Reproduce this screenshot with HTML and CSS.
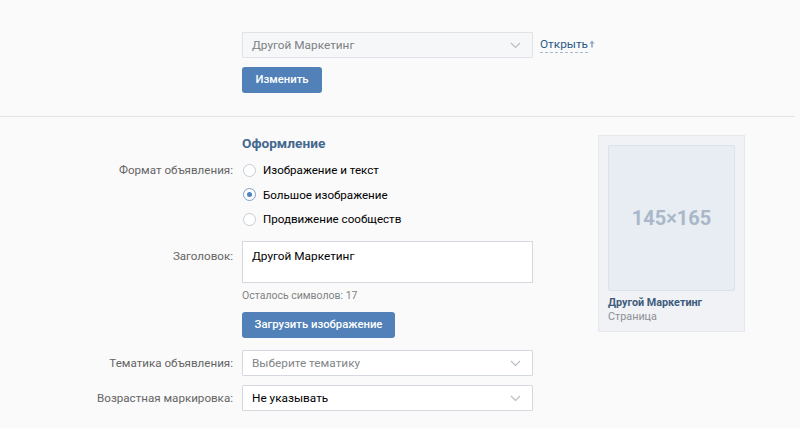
FILE: index.html
```html
<!DOCTYPE html>
<html lang="ru">
<head>
<meta charset="utf-8">
<link rel="stylesheet" href="styles.css">
</head>
<body>
<div class="page">
  <section class="top">
    <div class="top-row">
      <div class="select select-disabled">
        <span class="select-text">Другой Маркетинг</span>
        <svg class="chev" width="11" height="7" viewBox="0 0 11 7"><path d="M1 1l4.5 4.5L10 1" fill="none" stroke="#b8bec6" stroke-width="1.2"/></svg>
      </div>
      <a class="open-link"><span class="dashed">Открыть</span><svg class="arrow" width="6" height="8" viewBox="0 0 6 8"><path d="M3 0.5L5.6 3.5H3.8V7.5H2.2V3.5H0.4Z" fill="#93a8c0"/></svg></a>
    </div>
    <button class="btn btn-change">Изменить</button>
  </section>
  <hr class="divider">
  <section class="design">
    <div class="form">
      <div class="row">
        <div class="label"></div>
        <h2 class="heading">Оформление</h2>
      </div>
      <div class="row row-format">
        <div class="label label-radio">Формат объявления:</div>
        <div class="radios">
          <label class="radio"><span class="dot"></span>Изображение и текст</label>
          <label class="radio checked"><span class="dot"></span>Большое изображение</label>
          <label class="radio"><span class="dot"></span>Продвижение сообществ</label>
        </div>
      </div>
      <div class="row row-title">
        <div class="label label-title">Заголовок:</div>
        <div class="textarea">Другой Маркетинг</div>
      </div>
      <div class="row row-counter">
        <div class="label"></div>
        <div class="counter">Осталось символов: 17</div>
      </div>
      <div class="row row-upload">
        <div class="label"></div>
        <button class="btn btn-upload">Загрузить изображение</button>
      </div>
      <div class="row row-theme">
        <div class="label label-select">Тематика объявления:</div>
        <div class="select">
          <span class="select-text placeholder">Выберите тематику</span>
          <svg class="chev" width="11" height="7" viewBox="0 0 11 7"><path d="M1 1l4.5 4.5L10 1" fill="none" stroke="#b8bec6" stroke-width="1.2"/></svg>
        </div>
      </div>
      <div class="row row-age">
        <div class="label label-select">Возрастная маркировка:</div>
        <div class="select">
          <span class="select-text value">Не указывать</span>
          <svg class="chev" width="11" height="7" viewBox="0 0 11 7"><path d="M1 1l4.5 4.5L10 1" fill="none" stroke="#b8bec6" stroke-width="1.2"/></svg>
        </div>
      </div>
    </div>
    <aside class="preview">
      <div class="preview-img">145×165</div>
      <div class="preview-name">Другой Маркетинг</div>
      <div class="preview-type">Страница</div>
    </aside>
  </section>
</div>
</body>
</html>
```

FILE: styles.css
```css
html, body {
  margin: 0;
  padding: 0;
  background: #fafafa;
}
body {
  font-family: Roboto, "Open Sans", Arial, sans-serif;
  font-size: 11.6px;
  color: #000;
  width: 800px;
  height: 428px;
  overflow: hidden;
}
.page {
  width: 800px;
}
.top {
  padding: 32px 0 0 242px;
  height: 116px;
  box-sizing: border-box;
}
.top-row {
  display: flex;
  align-items: center;
}
.select {
  width: 291px;
  height: 26px;
  box-sizing: border-box;
  border: 1px solid #d3d9de;
  background: #fff;
  display: flex;
  align-items: center;
  justify-content: space-between;
  padding: 0 11px 0 9px;
  border-radius: 1px;
}
.select-disabled {
  background: #f6f7f9;
  border-color: #dfe3e8;
}
.select-text {
  font-size: 11.8px;
  color: #222;
}
.select-disabled .select-text {
  color: #7d7f83;
}
.select-text.placeholder {
  color: #828589;
}
.select-text.value {
  color: #000;
}
.chev {
  display: block;
}
.open-link {
  margin-left: 7px;
  color: #2a5885;
  font-size: 11.8px;
  display: flex;
  align-items: center;
}
.dashed {
  border-bottom: 1px dashed #a9b9cb;
  line-height: 15px;
}
.arrow {
  display: block;
  margin-left: 1px;
  margin-top: -2px;
}
.btn {
  display: block;
  border: 0;
  background: #5181b8;
  color: #fff;
  font-family: Roboto, "Open Sans", Arial, sans-serif;
  font-size: 11.3px;
  font-weight: 500;
  height: 26px;
  border-radius: 3px;
  padding: 0;
  line-height: 26px;
  text-align: center;
}
.btn-change {
  margin-top: 9px;
  width: 80px;
}
.divider {
  margin: 0;
  border: 0;
  border-top: 1px solid #e3e4e8;
  height: 0;
  width: 795px;
}
.design {
  display: flex;
  align-items: flex-start;
  padding-top: 18px;
}
.form {
  width: 533px;
}
.row {
  display: flex;
  align-items: flex-start;
}
.label {
  width: 242px;
  flex: none;
  box-sizing: border-box;
  padding-right: 9px;
  text-align: right;
  color: #656565;
  font-size: 11.6px;
}
.heading {
  margin: 0;
  font-size: 13.7px;
  line-height: 17px;
  font-weight: 700;
  color: #45688e;
}
.row-format {
  margin-top: 6px;
}
.label-radio {
  line-height: 24.5px;
}
.radios {
  display: flex;
  flex-direction: column;
}
.radio {
  display: flex;
  align-items: center;
  height: 24.5px;
  font-size: 11.6px;
  color: #000;
}
.dot {
  width: 13px;
  height: 13px;
  border: 1px solid #c5cdd6;
  border-radius: 50%;
  background: #fff;
  margin: 0 7px 0 1px;
  box-sizing: border-box;
  position: relative;
}
.radio.checked .dot {
  border-color: #7fa0c8;
}
.radio.checked .dot::after {
  content: "";
  position: absolute;
  left: 3px;
  top: 3px;
  width: 5px;
  height: 5px;
  border-radius: 50%;
  background: #5181b8;
}
.row-title {
  margin-top: 9.5px;
}
.label-title {
  padding-top: 7px;
  line-height: 16px;
}
.textarea {
  width: 291px;
  height: 42px;
  box-sizing: border-box;
  border: 1px solid #d3d9de;
  background: #fff;
  padding: 6px 9px;
  line-height: 16px;
  font-size: 11.8px;
}
.row-counter {
  margin-top: 6px;
}
.counter {
  font-size: 10.5px;
  line-height: 14px;
  color: #828282;
}
.row-upload {
  margin-top: 9px;
}
.btn-upload {
  width: 153px;
}
.row-theme {
  margin-top: 12px;
}
.row-age {
  margin-top: 9px;
}
.label-select {
  line-height: 26px;
}
.preview {
  margin-left: 65px;
  width: 147px;
  height: 197px;
  box-sizing: border-box;
  background: #f0f2f5;
  border: 1px solid #e6e8ec;
  padding: 9px 9px 0 9px;
}
.preview-img {
  height: 146px;
  box-sizing: border-box;
  border: 1px solid #dbe2ea;
  background: #e8edf3;
  border-radius: 2px;
  display: flex;
  align-items: center;
  justify-content: center;
  font-size: 20px;
  font-weight: 700;
  color: #a9b8c9;
}
.preview-name {
  margin-top: 5px;
  font-size: 10.8px;
  font-weight: 700;
  color: #3e5c7d;
  line-height: 14px;
}
.preview-type {
  font-size: 10.8px;
  color: #8c8f93;
  line-height: 14px;
}
```
